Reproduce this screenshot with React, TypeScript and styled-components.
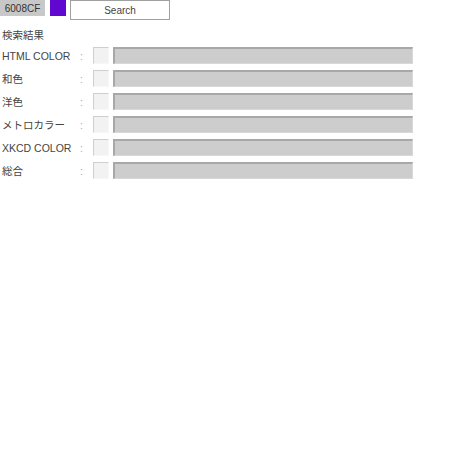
import styled, { createGlobalStyle } from "styled-components"

const GlobalStyle = createGlobalStyle`
    body {
        margin: 0;
        background: #ffffff;
        font-family: "Liberation Sans", Arial, "Noto Sans CJK JP", sans-serif;
        font-size: 10.5px;
        color: #444;
    }
`
const Wrapper = styled.div`
    display: flex;
    flex-direction: column;
`
const TopBar = styled.div`
    display: flex;
    align-items: flex-start;
    height: 20px;
`
const HexLabel = styled.div`
    width: 45px;
    height: 16px;
    background-color: #c8c8c8;
    color: #333;
    display: flex;
    align-items: center;
    justify-content: center;
    font-size: 10px;
`
const Swatch = styled.div<{ color: string }>`
    width: 16px;
    height: 16px;
    margin-left: 5px;
    background-color: ${props => props.color};
`
const SearchButton = styled.button`
    margin-left: 4px;
    width: 100px;
    height: 20px;
    background: #fff;
    border: 1px solid #a0a0a0;
    font-family: inherit;
    font-size: 10px;
    color: #444;
    padding: 0;
`
const Title = styled.div`
    margin-top: 8px;
    padding-left: 2px;
    height: 14px;
    line-height: 14px;
`
const Rows = styled.div`
    display: flex;
    flex-direction: column;
    gap: 6px;
    margin-top: 5px;
`
const Row = styled.div`
    display: flex;
    align-items: center;
    height: 17px;
`
const Label = styled.div`
    width: 78px;
    padding-left: 2px;
`
const Colon = styled.div`
    width: 13px;
    color: #aaa;
`
const SmallBox = styled.div`
    width: 16px;
    height: 17px;
    box-sizing: border-box;
    background: #f2f2f2;
    border-top: 1px solid #cfcfcf;
    border-left: 1px solid #cfcfcf;
    border-right: 1px solid #f7f7f7;
    border-bottom: 1px solid #f7f7f7;
`
const Bar = styled.div`
    margin-left: 4px;
    width: 300px;
    height: 17px;
    box-sizing: border-box;
    background: #cdcdcd;
    border-top: 2px solid #a8a8a8;
    border-left: 2px solid #a8a8a8;
    border-right: 1px solid #d8d8d8;
    border-bottom: 1px solid #d8d8d8;
`

const labels = ["HTML COLOR", "和色", "洋色", "メトロカラー", "XKCD COLOR", "総合"]

function App() {
    return (
        <Wrapper>
            <GlobalStyle />
            <TopBar>
                <HexLabel>6008CF</HexLabel>
                <Swatch color="#6008CF" />
                <SearchButton>Search</SearchButton>
            </TopBar>
            <Title>検索結果</Title>
            <Rows>
                {labels.map(l => (
                    <Row key={l}>
                        <Label>{l}</Label>
                        <Colon>:</Colon>
                        <SmallBox />
                        <Bar />
                    </Row>
                ))}
            </Rows>
        </Wrapper>
    )
}

export default App
